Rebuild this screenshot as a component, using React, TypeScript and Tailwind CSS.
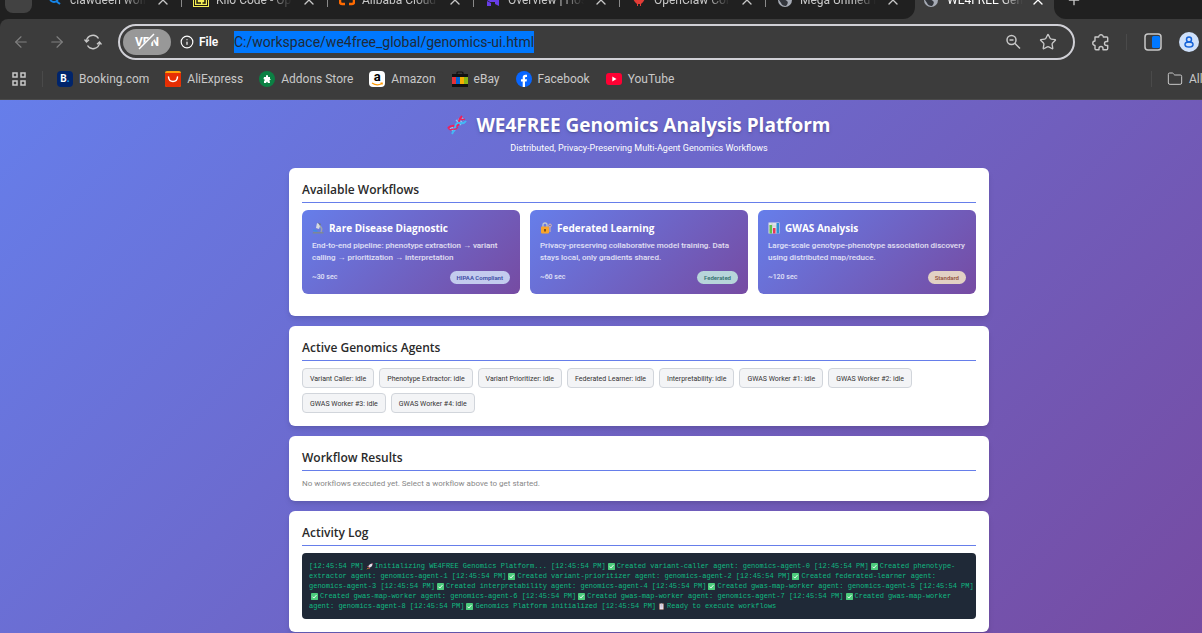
import type { ReactNode } from 'react';
import { ArrowLeft, ArrowRight, Folder, Info, Plus, Star, X } from 'lucide-react';

function GlobeIcon() {
  return (
    <svg viewBox="0 0 16 16" className="size-4 shrink-0">
      <circle cx="8" cy="8" r="7" fill="#a6abb5" />
      <path d="M4 3 Q8 5 7 7 L10 9 Q12 11 9 14 Q5 14 4 11 L2 8 Z" fill="#33363c" />
      <path d="M10 2 L13 4 V8 L11 7 Z" fill="#33363c" />
    </svg>
  );
}

const tabs: { title: string; icon: ReactNode }[] = [
  {
    title: 'clawdeen wolf',
    icon: (
      <svg viewBox="0 0 16 16" className="size-4 shrink-0" fill="none" stroke="#1585e8" strokeWidth="2">
        <circle cx="7" cy="6" r="4" />
        <path d="M9 9 L13 12" />
      </svg>
    ),
  },
  {
    title: 'Kilo Code - Open Source',
    icon: (
      <svg viewBox="0 0 16 16" className="size-4 shrink-0">
        <rect width="16" height="15" fill="#f4ee55" />
        <rect x="1" y="1" width="14" height="13" fill="#1a1a10" />
        <rect x="2" y="2" width="12" height="11" fill="#f4ee55" />
        <path d="M4 4 V11 H8 M10 5 V7 H12 V11 H9.500" fill="none" stroke="#1a1a10" strokeWidth="1.500" />
      </svg>
    ),
  },
  {
    title: 'Alibaba Cloud Console',
    icon: (
      <svg viewBox="0 0 16 16" className="size-4 shrink-0" fill="none" stroke="#ff6a00" strokeWidth="2.500">
        <path d="M6 3 H3 Q1 3 1 5 V10 Q1 12 3 12 H6 M10 3 H13 Q15 3 15 5 V10 Q15 12 13 12 H10" />
      </svg>
    ),
  },
  {
    title: 'Overview | Hostinger',
    icon: (
      <svg viewBox="0 0 16 16" className="size-4 shrink-0" fill="#673de6">
        <path d="M2 1 L6 3 V6 H10 L14 8 H2 Z M14 14 L10 12 V10 H5 L2 8 H14 Z M2 9 L6 11 V14 H2 Z" />
      </svg>
    ),
  },
  {
    title: 'OpenClaw Control',
    icon: (
      <svg viewBox="0 0 16 16" className="size-4 shrink-0">
        <path d="M2 6 Q3 2 8 3 Q13 2 14 6 Q13 10 10 12 V14 H9 V12 H7 V14 H6 V12 Q3 10 2 6Z" fill="#e23c36" />
      </svg>
    ),
  },
  { title: 'Mega Unified Platform', icon: <GlobeIcon /> },
];

const bookmarks: { label: string; icon: ReactNode }[] = [
  {
    label: 'Booking.com',
    icon: (
      <span className="flex size-4 items-center justify-center rounded-sm bg-[#00246b] text-[10px] font-bold text-white">
        B<span className="text-[#18a4f0]">.</span>
      </span>
    ),
  },
  {
    label: 'AliExpress',
    icon: (
      <svg viewBox="0 0 16 16" className="size-4">
        <rect width="16" height="16" rx="2" fill="#ff9f0a" />
        <path d="M0 2 H16 V14 Q16 16 14 16 H2 Q0 16 0 14Z" fill="#e62e04" />
        <path d="M3.500 6 Q4 10.500 8 10.500 Q12 10.500 12.500 6" fill="none" stroke="#fff" strokeWidth="1.500" strokeLinecap="round" />
      </svg>
    ),
  },
  {
    label: 'Addons Store',
    icon: (
      <svg viewBox="0 0 16 16" className="size-4">
        <circle cx="8" cy="8" r="8" fill="#0b8043" />
        <path d="M5 6 H7 Q6.500 4 8 4 Q9.500 4 9 6 H11 V8 Q12 8 11.500 9 H10.500 L11 12 H9 L8 10.500 L7 12 H5 V10 L6 9 L4.500 8Z" fill="#fff" />
      </svg>
    ),
  },
  {
    label: 'Amazon',
    icon: (
      <span className="relative flex size-4 items-center justify-center rounded-sm bg-white text-[13px] leading-3 font-bold text-black">
        <span className="-mt-1">a</span>
        <svg viewBox="0 0 16 16" className="absolute inset-0 size-4" fill="none" stroke="#ff9900" strokeWidth="1.200">
          <path d="M3 12 Q8 15.500 13 12.500 M11.500 12 H13.200 V13.500" />
        </svg>
      </span>
    ),
  },
  {
    label: 'eBay',
    icon: (
      <svg viewBox="0 0 16 16" className="size-4">
        <path d="M5 4 V2 Q5 1 6 1 H10 Q11 1 11 2 V4" fill="none" stroke="#111" strokeWidth="1.200" />
        <rect y="3" width="16" height="3" fill="#111" />
        <rect y="6" width="4" height="7" fill="#e53238" />
        <rect x="4" y="6" width="4" height="7" fill="#0064d2" />
        <rect x="8" y="6" width="4" height="7" fill="#f5af02" />
        <rect x="12" y="6" width="4" height="7" fill="#86b817" />
        <rect y="13" width="16" height="3" fill="#111" />
      </svg>
    ),
  },
  {
    label: 'Facebook',
    icon: (
      <svg viewBox="0 0 16 16" className="size-4">
        <circle cx="8" cy="8" r="8" fill="#0866ff" />
        <path d="M6.700 16 V10.500 H5 V8.200 H6.700 V6.600 Q6.700 3.800 9.400 3.800 H11 V6 H9.900 Q9 6 9 7 V8.200 H11 L10.600 10.500 H9 V16Z" fill="#fff" />
      </svg>
    ),
  },
  {
    label: 'YouTube',
    icon: (
      <svg viewBox="0 0 16 16" className="size-4">
        <rect y="2" width="16" height="12" rx="3" fill="#ff0033" />
        <path d="M6.300 5.600 L10.500 8 L6.300 10.400Z" fill="#fff" />
      </svg>
    ),
  },
];

function DnaIcon() {
  return (
    <svg viewBox="0 0 20 20" className="size-5 shrink-0" fill="none" strokeWidth="1.300">
      <path d="M9 5 L14 10 M11 4 L16 8 M4 11 L8 16 M3 13 L6 16 M14 2 L17 5" stroke="#8ec9f5" />
      <path d="M1 13 Q4 10 8 11 Q12 11 12 7 Q12 4 15 1" stroke="#f0205c" strokeWidth="2" />
      <path d="M5 19 Q7 16 8 12 Q9 7 13 8 Q17 9 19 6" stroke="#42b8f4" strokeWidth="2" />
      <path d="M1 13 Q3 16 6 14 Q9 15 11 12 M13 4 Q16 5 18 4" stroke="#e8245f" />
    </svg>
  );
}

function MicroscopeIcon() {
  return (
    <svg viewBox="0 0 12 12" className="size-3 shrink-0">
      <path d="M1 10 H11.500 V11.500 H0.500Z" fill="#7d8794" />
      <path d="M7.500 4 Q11 6 9 10" fill="none" stroke="#9aa3ad" strokeWidth="1.500" />
      <path d="M5 1 L8.500 2.500 L7 7 L4 6Z" fill="#d5d9df" />
      <path d="M6 0.500 L9 2 L8 4Z" fill="#66707c" />
      <path d="M1.500 7 L6 9 L5 10 L1 9Z" fill="#3f8fe0" />
    </svg>
  );
}

function LockIcon() {
  return (
    <svg viewBox="0 0 12 12" className="size-3 shrink-0">
      <path d="M3 5 V3 Q3 1 5 1 Q7 1 7 3 V5" fill="none" stroke="#c3c8d0" strokeWidth="1.300" />
      <rect x="1" y="4.500" width="8" height="7" rx="1" fill="#f9a52b" />
      <path d="M5 7 V9.500" stroke="#5a3a10" strokeWidth="1.500" />
      <circle cx="10" cy="3.500" r="1.400" fill="none" stroke="#dfb7a0" />
      <path d="M10 5 V10" stroke="#dfb7a0" />
    </svg>
  );
}

function ChartIcon() {
  return (
    <svg viewBox="0 0 12 12" className="size-3 shrink-0">
      <rect x="0.500" y="0.500" width="11" height="11" fill="#dfe3e6" />
      <path d="M0.500 4 H11.500 M0.500 8 H11.500 M4 0.500 V11.500" stroke="#b4b9bf" strokeWidth="0.500" />
      <rect x="1.500" y="3" width="2.500" height="8.500" fill="#5fc04a" />
      <rect x="5" y="6" width="2.500" height="5.500" fill="#e8335a" />
      <rect x="8.500" y="1" width="2.500" height="10.500" fill="#2d8fd6" />
    </svg>
  );
}

const workflows = [
  {
    icon: MicroscopeIcon,
    title: 'Rare Disease Diagnostic',
    description: 'End-to-end pipeline: phenotype extraction → variant calling → prioritization → interpretation',
    time: '~30 sec',
    badge: 'HIPAA Compliant',
    badgeClass: 'bg-[#c3cbee] text-[#3949a3]',
  },
  {
    icon: LockIcon,
    title: 'Federated Learning',
    description: 'Privacy-preserving collaborative model training. Data stays local, only gradients shared.',
    time: '~60 sec',
    badge: 'Federated',
    badgeClass: 'bg-[#b7d5da] text-[#35706f]',
  },
  {
    icon: ChartIcon,
    title: 'GWAS Analysis',
    description: 'Large-scale genotype-phenotype association discovery using distributed map/reduce.',
    time: '~120 sec',
    badge: 'Standard',
    badgeClass: 'bg-[#e2d1c4] text-[#94553f]',
  },
];

const agents = [
  'Variant Caller',
  'Phenotype Extractor',
  'Variant Prioritizer',
  'Federated Learner',
  'Interpretability',
  'GWAS Worker #1',
  'GWAS Worker #2',
  'GWAS Worker #3',
  'GWAS Worker #4',
];

const logIcons: Record<string, ReactNode> = {
  '🚀': (
    <svg viewBox="0 0 8 8" className="mx-0.5 size-[7px] shrink-0">
      <path d="M7.500 0.500 Q4 0.500 2.500 4 L4 5.500 Q7.500 4 7.500 0.500Z" fill="#dfe3ea" />
      <path d="M2.500 3 L1 4 L2.500 4.500Z M5 5.500 L4 7 L3.500 5.500Z M6 0.500 H7.500 V2Z" fill="#e8335a" />
      <path d="M2.500 5 L0.500 7.500 L3.500 6Z" fill="#f9a52b" />
    </svg>
  ),
  '✅': (
    <svg viewBox="0 0 8 8" className="mx-0.5 size-[7px] shrink-0">
      <rect width="8" height="8" rx="0.500" fill="#4ccb7c" />
      <path d="M1.800 4.200 L3.300 5.800 L6.300 2.300" fill="none" stroke="#fff" />
    </svg>
  ),
  '📋': (
    <svg viewBox="0 0 8 8" className="mx-0.5 size-[7px] shrink-0">
      <rect x="1.500" y="0.500" width="5" height="7" fill="#b98268" />
      <rect x="2" y="1.200" width="4" height="6" fill="#e8e2f0" />
      <path d="M2.800 3 H5.200 M2.800 4.500 H5.200" stroke="#9a90b8" strokeWidth="0.500" />
      <rect x="3" y="0" width="2" height="1.500" fill="#8f96a3" />
    </svg>
  ),
};

const logLines = [
  '[12:45:54 PM] 🚀 Initializing WE4FREE Genomics Platform... [12:45:54 PM] ✅ Created variant-caller agent: genomics-agent-0 [12:45:54 PM] ✅ Created phenotype-',
  'extractor agent: genomics-agent-1 [12:45:54 PM] ✅ Created variant-prioritizer agent: genomics-agent-2 [12:45:54 PM] ✅ Created federated-learner agent:',
  'genomics-agent-3 [12:45:54 PM] ✅ Created interpretability agent: genomics-agent-4 [12:45:54 PM] ✅ Created gwas-map-worker agent: genomics-agent-5 [12:45:54 PM]',
  '✅ Created gwas-map-worker agent: genomics-agent-6 [12:45:54 PM] ✅ Created gwas-map-worker agent: genomics-agent-7 [12:45:54 PM] ✅ Created gwas-map-worker',
  'agent: genomics-agent-8 [12:45:54 PM] ✅ Genomics Platform initialized [12:45:54 PM] 📋 Ready to execute workflows',
];

function LogLine({ text }: { text: string }) {
  return (
    <div className="flex items-center whitespace-nowrap">
      {text.split(/\s*(🚀|✅|📋)\s*/u).map((part, index) => logIcons[part] ? (
        <span key={index}>{logIcons[part]}</span>
      ) : (
        part && <span key={index}>{part}</span>
      ))}
    </div>
  );
}

function Section({ title, children }: { title: string; children: ReactNode }) {
  return (
    <section className="rounded-md bg-white p-[13px] shadow-md">
      <h2 className="mb-[7px] border-b border-[#667eea] pb-[3px] font-['Open_Sans',sans-serif] text-xs leading-[18px] font-semibold text-[#2a2a2a]">
        {title}
      </h2>
      {children}
    </section>
  );
}

function BrowserChrome() {
  return (
    <header className="overflow-hidden border-b border-[#4a4a4a] bg-[#202020] text-[#c8c8c8]">
      <div className="h-[19px] overflow-hidden bg-[#3c3c3c] text-xs">
        <div className="-mt-[19px] flex h-[38px] items-center whitespace-nowrap">
          <div className="flex h-full shrink-0 items-center rounded-br-xl bg-[#202020] pr-[3px] pl-[5px]">
            <button className="mr-1 h-[26px] w-[27px] shrink-0 rounded-lg bg-[#424242]" aria-label="Tab menu" />
            {tabs.map((tab, index) => (
              <div key={tab.title} className="flex w-[146px] shrink-0 items-center pl-[11px]">
                {tab.icon}
                <span className="ml-[7px] w-[76px] overflow-hidden mask-r-from-70%">{tab.title}</span>
                <button className="ml-[9px]" aria-label="Close tab">
                  <X size={16} />
                </button>
                {index < tabs.length - 1 && <span className="ml-auto h-[14px] w-px bg-[#8a8a8a]" />}
              </div>
            ))}
          </div>
          <div className="flex h-full w-[139px] shrink-0 items-center bg-[#3c3c3c] pl-2 text-white">
            <GlobeIcon />
            <span className="ml-2 w-[76px] overflow-hidden mask-r-from-70%">WE4FREE Genomics</span>
            <button className="ml-[7px]" aria-label="Close tab">
              <X size={16} />
            </button>
          </div>
          <div className="flex h-full flex-1 items-center rounded-bl-xl bg-[#202020] pl-3">
            <button aria-label="New tab">
              <Plus size={16} />
            </button>
          </div>
        </div>
      </div>

      <div className="flex h-[45px] items-center rounded-tl-lg bg-[#3c3c3c] pr-[3px] pl-3">
        <button className="mr-[18px] text-[#808080]" aria-label="Back">
          <ArrowLeft size={18} strokeWidth={1.5} />
        </button>
        <button className="mr-[18px] text-[#808080]" aria-label="Forward">
          <ArrowRight size={18} strokeWidth={1.5} />
        </button>
        <button className="mr-4" aria-label="Reload">
          <svg viewBox="0 0 18 18" className="size-[18px]" fill="none" stroke="#c8c8c8" strokeWidth="1.400">
            <path d="M2.500 8 A6.500 6.500 0 0 1 14.500 5.500 M15.500 10 A6.500 6.500 0 0 1 3.500 12.500" />
            <path d="M0.500 6.500 L2.500 9 L5 6.800 M17.500 11.500 L15.500 9 L13 11.200" />
          </svg>
        </button>
        <div className="flex h-9 min-w-0 flex-1 items-center rounded-full border-2 border-[#d0d0d6] pr-4 pl-[3px]">
          <button className="relative h-[26px] w-12 shrink-0 rounded-full bg-[#989898] text-xs font-bold text-white">
            VPN
            <svg viewBox="0 0 48 26" className="absolute inset-0 h-[26px] w-12">
              <path d="M17.500 21.500 L31.500 6.500" stroke="#989898" strokeWidth="5" />
              <path d="M16 20 L31 5" stroke="#fff" strokeWidth="1.500" />
            </svg>
          </button>
          <Info size={14} className="ml-[9px] shrink-0 text-white" />
          <label htmlFor="address" className="ml-[5px] w-[35px] text-xs font-semibold text-white">
            File
          </label>
          <input
            id="address"
            readOnly
            defaultValue="C:/workspace/we4free_global/genomics-ui.html"
            className="field-sizing-content h-[22px] bg-[#0078ff] text-sm text-[#1f2a38]"
          />
          <button className="ml-auto" aria-label="Zoom">
            <svg viewBox="0 0 16 16" className="size-4" fill="none" stroke="#c8c8c8" strokeWidth="1.500">
              <circle cx="6.500" cy="6" r="4.500" />
              <path d="M4.500 6 H8.500 M9.800 9.300 L15 14.500" />
            </svg>
          </button>
          <button className="ml-[18px]" aria-label="Bookmark">
            <Star size={18} strokeWidth={1.8} />
          </button>
        </div>
        <button className="mr-[17px] ml-4" aria-label="Extensions">
          <svg viewBox="0 0 18 18" className="size-[18px]" fill="none" stroke="#c8c8c8" strokeWidth="1.400" strokeLinejoin="round">
            <path d="M4 4 H7.700 A2.300 2.300 0 1 1 12.300 4 H16 Q16.700 4 16.700 5 V8.500 H15.500 A2 2 0 0 0 15.500 12.500 H16.700 V15.500 Q16.700 16.700 15.500 16.700 H12 V15.500 A2 2 0 0 0 8 15.500 V16.700 H5 Q4 16.700 4 15.500 V12.500 A2.200 2.200 0 1 1 4 8 Z" />
          </svg>
        </button>
        <span className="h-4 w-px bg-[#4a4a4a]" />
        <button className="mx-[17px]" aria-label="Sidebar">
          <svg viewBox="0 0 18 18" className="size-[18px]">
            <rect x="1" y="1" width="16" height="16" rx="3" fill="none" stroke="#c8c8c8" strokeWidth="1.500" />
            <rect x="8" y="3" width="8" height="12" rx="1.500" fill="#0078ff" />
          </svg>
        </button>
        <button aria-label="Profile">
          <svg viewBox="0 0 20 20" className="size-5" fill="none" stroke="#1462d8" strokeWidth="1.500">
            <circle cx="10" cy="10" r="10" fill="#cfe1fb" stroke="none" />
            <circle cx="10" cy="7.500" r="2.500" />
            <ellipse cx="10" cy="12.500" rx="4" ry="2.500" />
          </svg>
        </button>
      </div>

      <nav className="flex h-[35px] items-start bg-[#3c3c3c] pt-[7px] pl-3 text-xs leading-4 whitespace-nowrap">
        <button className="pt-px" aria-label="Apps">
          <svg viewBox="0 0 14 14" className="size-[14px]" fill="none" stroke="#c8c8c8" strokeWidth="1.500">
            <path d="M1 1 H5 V5 H1Z M9 1 H13 V5 H9Z M1 9 H5 V13 H1Z M9 9 H13 V13 H9Z" />
          </svg>
        </button>
        <span className="mr-[14px] ml-4 h-4 w-px shrink-0 bg-[#4a4a4a]" />
        <div className="flex gap-4">
          {bookmarks.map((bookmark) => (
            <a key={bookmark.label} href="#" className="flex items-center gap-[6px]">
              {bookmark.icon}
              {bookmark.label}
            </a>
          ))}
        </div>
        <span className="mr-[15px] ml-auto h-4 w-px shrink-0 bg-[#4a4a4a]" />
        <a href="#" className="flex w-[35px] items-center gap-[6px]">
          <Folder size={16} strokeWidth={1.5} className="shrink-0" />
          All Bookmarks
        </a>
      </nav>
    </header>
  );
}

export default function App() {
  return (
    <div className="flex min-h-screen flex-col overflow-hidden font-[Roboto,sans-serif]">
      <BrowserChrome />
      <main className="flex-1 bg-linear-[135deg] from-[#667eea] to-[#764ba2] pb-[2px] pl-[76px]">
        <div className="mx-auto max-w-[700px]">
          <div className="pt-[10px] pb-[11px] text-center text-white">
            <h1 className="flex items-center justify-center gap-[9px] font-['Open_Sans',sans-serif] text-[19px] leading-[30px] font-bold text-shadow-md">
              <DnaIcon />
              WE4FREE Genomics Analysis Platform
            </h1>
            <p className="text-[9px] leading-[17px]">Distributed, Privacy-Preserving Multi-Agent Genomics Workflows</p>
          </div>

          <div className="flex flex-col gap-[10px]">
            <Section title="Available Workflows">
              <div className="mb-[9px] grid grid-cols-3 gap-[10px]">
                {workflows.map((workflow) => {
                  const Icon = workflow.icon;
                  return (
                    <button
                      key={workflow.title}
                      className="rounded-md bg-linear-[135deg] from-[#667eea] to-[#764ba2] p-[10px] text-left text-white"
                    >
                      <h3 className="mb-1 flex items-center gap-[5px] font-['Open_Sans',sans-serif] text-[10px] leading-4 font-bold">
                        <Icon />
                        {workflow.title}
                      </h3>
                      <p className="mb-[7px] text-[8px] leading-3 font-medium text-white/80">{workflow.description}</p>
                      <div className="flex items-center justify-between">
                        <span className="text-[7px] leading-[13px] font-medium text-white/80">{workflow.time}</span>
                        <span className={`rounded-full px-[7px] text-[6px] leading-[13px] font-semibold ${workflow.badgeClass}`}>
                          {workflow.badge}
                        </span>
                      </div>
                    </button>
                  );
                })}
              </div>
            </Section>

            <Section title="Active Genomics Agents">
              <ul className="flex flex-wrap gap-[5px]">
                {agents.map((agent) => (
                  <li
                    key={agent}
                    className="rounded-sm border border-[#d1d5db] bg-[#f3f4f6] px-[7px] pt-0.5 text-[7px] leading-4 text-[#333333]"
                  >
                    {agent}: idle
                  </li>
                ))}
              </ul>
            </Section>

            <Section title="Workflow Results">
              <p className="pt-0.5 text-[8px] leading-2 text-[#888888]">No workflows executed yet. Select a workflow above to get started.</p>
            </Section>

            <Section title="Activity Log">
              <div className="rounded-sm bg-[#1f2937] px-[7px] py-2 font-['Liberation_Mono',monospace] text-[7px] leading-[10px] text-[#10b981]">
                {logLines.map((line) => (
                  <LogLine key={line} text={line} />
                ))}
              </div>
            </Section>
          </div>
        </div>
      </main>
    </div>
  );
}
